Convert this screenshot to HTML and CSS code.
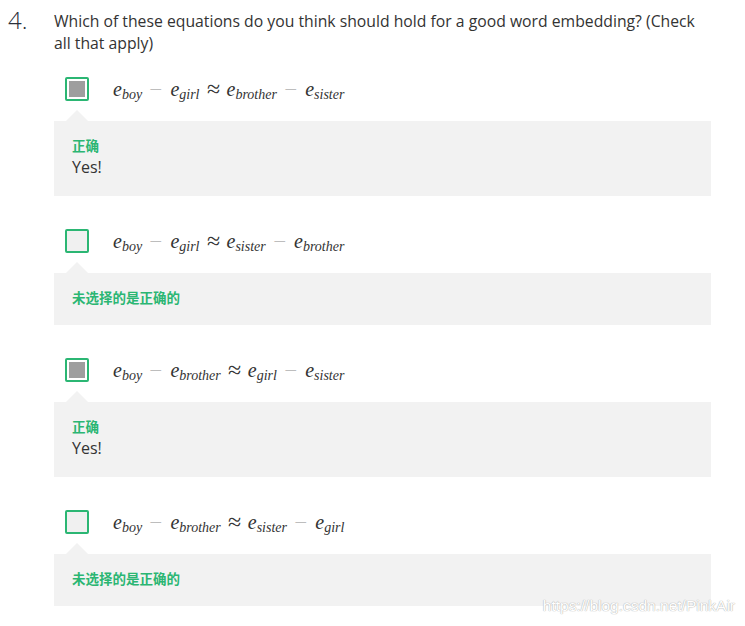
FILE: index.html
```html
<!DOCTYPE html>
<html lang="en">
<head>
<meta charset="utf-8">
<title>Quiz question 4</title>
<link rel="stylesheet" href="styles.css">
</head>
<body>
<div class="question">
  <div class="qnum">4.</div>
  <div class="qbody">
    <div class="qtext">Which of these equations do you think should hold for a good word embedding? (Check all that apply)</div>

    <div class="option">
      <div class="opt-row">
        <span class="cb checked"><span class="cb-fill"></span></span>
        <span class="math"><span class="mi">e</span><sub>boy</sub><span class="bin">−</span><span class="mi">e</span><sub>girl</sub><span class="rel">≈</span><span class="mi">e</span><sub>brother</sub><span class="bin">−</span><span class="mi">e</span><sub>sister</sub></span>
      </div>
      <div class="feedback">
        <div class="fb-label">正确</div>
        <div class="fb-text">Yes!</div>
      </div>
    </div>

    <div class="option">
      <div class="opt-row">
        <span class="cb"></span>
        <span class="math"><span class="mi">e</span><sub>boy</sub><span class="bin">−</span><span class="mi">e</span><sub>girl</sub><span class="rel">≈</span><span class="mi">e</span><sub>sister</sub><span class="bin">−</span><span class="mi">e</span><sub>brother</sub></span>
      </div>
      <div class="feedback">
        <div class="fb-label">未选择的是正确的</div>
      </div>
    </div>

    <div class="option">
      <div class="opt-row">
        <span class="cb checked"><span class="cb-fill"></span></span>
        <span class="math"><span class="mi">e</span><sub>boy</sub><span class="bin">−</span><span class="mi">e</span><sub>brother</sub><span class="rel">≈</span><span class="mi">e</span><sub>girl</sub><span class="bin">−</span><span class="mi">e</span><sub>sister</sub></span>
      </div>
      <div class="feedback">
        <div class="fb-label">正确</div>
        <div class="fb-text">Yes!</div>
      </div>
    </div>

    <div class="option">
      <div class="opt-row">
        <span class="cb"></span>
        <span class="math"><span class="mi">e</span><sub>boy</sub><span class="bin">−</span><span class="mi">e</span><sub>brother</sub><span class="rel">≈</span><span class="mi">e</span><sub>sister</sub><span class="bin">−</span><span class="mi">e</span><sub>girl</sub></span>
      </div>
      <div class="feedback">
        <div class="fb-label">未选择的是正确的</div>
      </div>
    </div>
  </div>
</div>
<div class="watermark">https://blog.csdn.net/PinkAir</div>
</body>
</html>
```

FILE: styles.css
```css
html, body {
  margin: 0;
  padding: 0;
  background: #ffffff;
}

body {
  position: relative;
  width: 745px;
  height: 626px;
  overflow: hidden;
  font-family: "Open Sans", "Noto Sans CJK SC", sans-serif;
  color: #333333;
}

.question {
  display: flex;
  align-items: flex-start;
  padding: 10px 34px 0 8px;
}

.qnum {
  width: 46px;
  flex: none;
  font-family: "Open Sans", sans-serif;
  font-weight: 300;
  font-size: 24px;
  line-height: 12px;
  padding-top: 4px;
  color: #2a2f3a;
}

.qbody {
  flex: 1;
  min-width: 0;
}

.qtext {
  font-size: 15.75px;
  line-height: 22px;
  color: #333333;
}

.option {
  margin-top: 23px;
}

.option + .option {
  margin-top: 33px;
}

.opt-row {
  display: flex;
  align-items: center;
  height: 24px;
  padding-left: 11px;
}

.cb {
  box-sizing: border-box;
  width: 24px;
  height: 24px;
  flex: none;
  border: 2px solid #2bb673;
  border-radius: 2px;
  background: #f0f0f0;
  padding: 2px;
  display: flex;
}

.cb.checked {
  background: #ffffff;
}

.cb-fill {
  flex: 1;
  background: #9e9e9e;
}

.math {
  margin-left: 24px;
  font-family: "Liberation Serif", "DejaVu Serif", serif;
  font-size: 20px;
  line-height: 24px;
  color: #333333;
  white-space: nowrap;
}

.mi {
  font-style: italic;
}

.math sub {
  font-style: italic;
  font-size: 14px;
  vertical-align: -3px;
  line-height: 0;
}

.bin {
  display: inline-block;
  color: #bdbdbd;
  transform: scaleX(1.15);
  margin: 0 9px 0 8px;
}

.rel {
  display: inline-block;
  color: #333333;
  transform: scale(1.2);
  margin: 0 8px;
}

.feedback {
  position: relative;
  margin-top: 20px;
  background: #f2f2f2;
  padding: 14px 18px 17px;
}

.feedback::before {
  content: "";
  position: absolute;
  left: 12px;
  top: -11px;
  border-left: 11px solid transparent;
  border-right: 11px solid transparent;
  border-bottom: 11px solid #f2f2f2;
}

.fb-label {
  font-family: "Noto Sans CJK SC", "Open Sans", sans-serif;
  font-weight: 700;
  font-size: 13.5px;
  line-height: 21px;
  color: #2bb673;
}

.fb-text {
  font-size: 16px;
  line-height: 23px;
  color: #333333;
}

.watermark {
  position: absolute;
  right: 10px;
  top: 596px;
  font-family: "Liberation Sans", sans-serif;
  font-size: 15.5px;
  line-height: 20px;
  color: #ffffff;
  text-shadow: 0 0 1px #b0b0b0, 0 0 1px #b0b0b0;
}
```
